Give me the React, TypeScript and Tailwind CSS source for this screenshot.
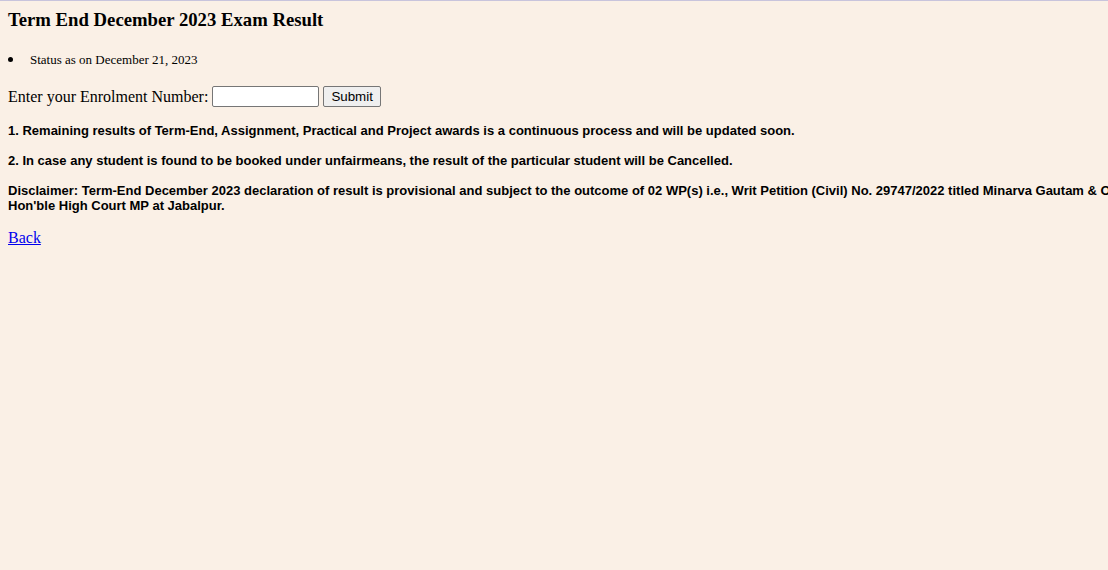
import React from "react";

export default function App() {
  return (
    <div className="min-h-screen w-full overflow-hidden border-t border-[#c8c4dc] bg-[#faf0e6] px-2 pt-2 text-black [font-family:'Liberation_Serif',serif]">
      <h3 className="m-0 text-[18.72px] font-bold leading-[22px]">Term End December 2023 Exam Result</h3>
      <ul className="mt-[21px] list-none p-0">
        <li className="flex items-center text-[13px] leading-[15px]">
          <span className="mr-[17px] inline-block h-[5px] w-[5px] rounded-full bg-black" />
          <span>Status as on December 21, 2023</span>
        </li>
      </ul>
      <div className="mt-[19px] flex items-center text-[16px] leading-[21px]">
        <span>Enter your Enrolment Number:</span>
        <input
          type="text"
          className="ml-[4px] h-[21px] w-[107px] rounded-[2px] border border-[#767676] bg-white px-[2px] text-[13px] outline-none"
        />
        <button className="ml-[4px] h-[21px] rounded-[2px] border border-[#767676] bg-[#efefef] px-[7px] text-[13.33px] leading-[16px] [font-family:'Liberation_Sans',Arial,sans-serif]">
          Submit
        </button>
      </div>
      <div className="text-[13px] font-bold leading-[15px] [font-family:'Liberation_Sans',Arial,sans-serif]">
        <p className="mt-[16px]">
          1. Remaining results of Term-End, Assignment, Practical and Project awards is a continuous process and will be updated soon.
        </p>
        <p className="mt-[15px]">
          2. In case any student is found to be booked under unfairmeans, the result of the particular student will be Cancelled.
        </p>
        <p className="mt-[15px] w-[1400px]">
          <span className="whitespace-nowrap">
            Disclaimer: Term-End December 2023 declaration of result is provisional and subject to the outcome of 02 WP(s) i.e., Writ Petition (Civil) No. 29747/2022 titled Minarva Gautam &amp; Others Vs. IGNOU pending before the
          </span>
          <br />
          Hon'ble High Court MP at Jabalpur.
        </p>
      </div>
      <p className="mt-[16px] text-[16px] leading-[18px]">
        <a href="#" className="text-[#0000ee] underline">Back</a>
      </p>
    </div>
  );
}
